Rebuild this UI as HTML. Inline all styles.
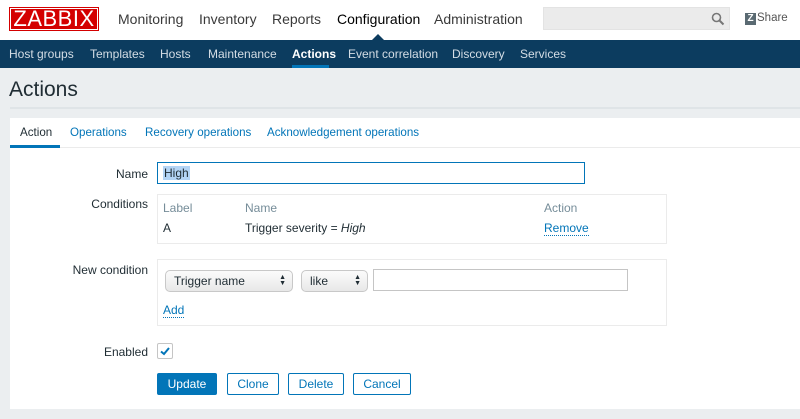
<!DOCTYPE html>
<html><head><meta charset="utf-8"><style>
*{margin:0;padding:0;box-sizing:border-box}
body{width:800px;height:419px;overflow:hidden;background:#ebeef0;font-family:"Liberation Sans",Arial,sans-serif;font-size:12px;color:#1f2c33;position:relative}
.a{position:absolute;white-space:nowrap}
.hdr{position:absolute;left:0;top:0;width:800px;height:40px;background:#fff}
.nav{position:absolute;left:0;top:40px;width:800px;height:28px;background:#0c3c5f}
.nav span{position:absolute;top:7px;color:#d4dde5;font-size:12px}
.top{font-size:14px;color:#3a3a3a;top:11px}
.lbl{right:652px;text-align:right;color:#1f2c33}
.box{position:absolute;border:1px solid #ebebeb;background:#fff}
.lnk{color:#0275b8}
.tab{top:126px;font-size:11.6px}
.btn{position:absolute;top:373px;height:22px;border:1px solid #0275b8;border-radius:2px;color:#0275b8;background:#fff;text-align:center;line-height:20px;font-size:12px}
.sel{position:absolute;height:22px;border:1px solid #c8c8c8;border-radius:5px;background:linear-gradient(#fbfbfb,#e8e8e8);padding-left:8px;line-height:20px;font-size:12px}
.sel i{position:absolute;right:6px;top:4px;font-style:normal;font-size:7px;line-height:6px}
</style></head><body>
<div class="hdr"></div>
<div class="a" style="left:9px;top:7px;width:90px;height:24px;background:#d40000;"><div style="position:absolute;left:1px;top:1px;right:1px;bottom:1px;border:1px solid #fff;color:#fff;font-size:22px;line-height:20px;text-align:center;letter-spacing:0.5px">ZABBIX</div></div>
<span class="a top" style="left:118px">Monitoring</span>
<span class="a top" style="left:199px">Inventory</span>
<span class="a top" style="left:272px">Reports</span>
<span class="a top" style="left:337px;color:#000">Configuration</span>
<span class="a top" style="left:434px">Administration</span>
<div class="a" style="left:372px;top:34px;width:0;height:0;border-left:6px solid transparent;border-right:6px solid transparent;border-bottom:6px solid #0c3c5f"></div>
<div class="a" style="left:543px;top:7px;width:187px;height:23px;background:#ebebeb;border:1px solid #e3e3e3"></div>
<svg class="a" style="left:711px;top:12px" width="14" height="14" viewBox="0 0 14 14"><circle cx="5.5" cy="5.5" r="4" fill="none" stroke="#777" stroke-width="1.6"/><path d="M8.5 8.5L12.5 12.5" stroke="#777" stroke-width="2"/></svg>
<div class="a" style="left:745px;top:13px;width:11px;height:12px;background:#5a6a72;color:#fff;font-size:10px;font-weight:bold;line-height:12px;text-align:center">Z</div>
<span class="a" style="left:757px;top:12px;font-size:11.5px;color:#555">Share</span>
<div class="nav">
<span style="left:9px">Host groups</span><span style="left:90px">Templates</span><span style="left:160px">Hosts</span><span style="left:208px">Maintenance</span>
<span style="left:292px;color:#fff;font-weight:bold">Actions</span>
<div style="position:absolute;left:292px;top:25px;width:37px;height:3px;background:#0275b8"></div>
<span style="left:348px">Event correlation</span><span style="left:452px">Discovery</span><span style="left:520px">Services</span>
</div>
<span class="a" style="left:9px;top:78px;font-size:21px;color:#1f2c33">Actions</span>
<div class="a" style="left:10px;top:107px;width:790px;height:2px;background:#dfe4e7"></div>
<div class="a" style="left:10px;top:118px;width:790px;height:291px;background:#fff"></div>
<div class="a" style="left:10px;top:147px;width:790px;height:1px;background:#ebebeb"></div>
<div class="a" style="left:10px;top:145px;width:50px;height:3px;background:#0275b8"></div>
<span class="a tab" style="left:20px">Action</span>
<span class="a lnk tab" style="left:70px">Operations</span>
<span class="a lnk tab" style="left:145px">Recovery operations</span>
<span class="a lnk tab" style="left:267px">Acknowledgement operations</span>
<span class="a lbl" style="top:167px">Name</span>
<span class="a lbl" style="top:197px">Conditions</span>
<span class="a lbl" style="top:263px">New condition</span>
<span class="a lbl" style="top:345px">Enabled</span>
<div class="a" style="left:157px;top:162px;width:428px;height:22px;border:1px solid #0275b8;background:#fff"></div>
<span class="a" style="left:163px;top:166px;background:#b3d4f5;padding:0 1px">High</span>
<div class="box" style="left:157px;top:194px;width:510px;height:50px"></div>
<span class="a" style="left:163px;top:201px;color:#768d99">Label</span>
<span class="a" style="left:245px;top:201px;color:#768d99">Name</span>
<span class="a" style="left:544px;top:201px;color:#768d99">Action</span>
<span class="a" style="left:163px;top:221px">A</span>
<span class="a" style="left:245px;top:221px">Trigger severity = <i>High</i></span>
<span class="a lnk" style="left:544px;top:221px;border-bottom:1px dotted #0275b8">Remove</span>
<div class="box" style="left:157px;top:259px;width:510px;height:67px"></div>
<div class="sel" style="left:165px;top:270px;width:128px">Trigger name<i>▲<br>▼</i></div>
<div class="sel" style="left:301px;top:270px;width:67px">like<i>▲<br>▼</i></div>
<div class="a" style="left:373px;top:269px;width:255px;height:22px;border:1px solid #c5c5c5;background:#fff"></div>
<span class="a lnk" style="left:163px;top:303px;border-bottom:1px dotted #0275b8">Add</span>
<div class="a" style="left:157px;top:343px;width:16px;height:16px;border:1px solid #c5c5c5;border-radius:2px;background:#fff"></div>
<svg class="a" style="left:159px;top:345px" width="12" height="12" viewBox="0 0 12 12"><path d="M2 6.5L5 9L10 3" fill="none" stroke="#0275b8" stroke-width="2"/></svg>
<div class="btn" style="left:157px;width:60px;background:#0275b8;color:#fff">Update</div>
<div class="btn" style="left:227px;width:52px">Clone</div>
<div class="btn" style="left:288px;width:56px">Delete</div>
<div class="btn" style="left:353px;width:58px">Cancel</div>
</body></html>
